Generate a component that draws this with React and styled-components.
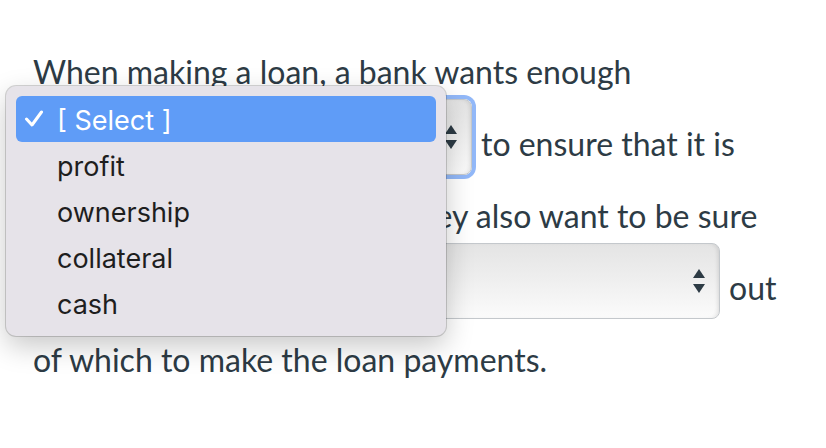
import React from "react";
import styled, { createGlobalStyle, css } from "styled-components";

const Global = createGlobalStyle`
  html, body { margin: 0; padding: 0; background: #ffffff; }
  body { width: 826px; height: 448px; overflow: hidden; }
`;

const Page = styled.div`
  position: relative;
  width: 826px;
  height: 448px;
  box-sizing: border-box;
  padding: 36px 0 0 33px;
  font-family: Lato, "Liberation Sans", sans-serif;
  font-size: 32px;
  color: #2d3b45;
`;

const Line = styled.div`
  display: flex;
  align-items: flex-start;
  height: 72px;
  line-height: 72px;
  white-space: nowrap;
`;

const Picker = styled.div`
  position: relative;
  box-sizing: border-box;
  flex: none;
  height: 76px;
  margin: -9px 9px 0 0;
  border: 1px solid #c4c8cc;
  border-radius: 8px;
  background: linear-gradient(to bottom, #e4e4e4 0%, #efefef 50%, #fbfbfb 100%);
  box-shadow: inset -3px 0 4px -2px rgba(0, 0, 0, 0.12);
  ${(p) =>
    p.$focused &&
    css`
      box-shadow: inset -3px 0 4px -2px rgba(0, 0, 0, 0.12),
        0 0 0 4px rgba(110, 160, 245, 0.75);
    `}
`;

const Arrows = styled.svg`
  position: absolute;
  right: 14px;
  top: 50%;
  margin-top: -13px;
`;

const Menu = styled.ul`
  position: absolute;
  left: 6px;
  top: 86px;
  width: 440px;
  height: 250px;
  box-sizing: border-box;
  margin: 0;
  padding: 10px;
  list-style: none;
  background: #e6e3e9;
  border-radius: 10px;
  box-shadow: 0 0 0 1px rgba(0, 0, 0, 0.16), 0 10px 28px rgba(0, 0, 0, 0.22);
  font-family: Inter, "Noto Sans", sans-serif;
  font-size: 27px;
  color: #1e1e1e;
`;

const Option = styled.li`
  position: relative;
  height: 46px;
  line-height: 50px;
  padding-left: 41px;
  border-radius: 6px;
  ${(p) =>
    p.$active &&
    css`
      background: #5f9cf7;
      color: #ffffff;
    `}
`;

const Check = styled.svg`
  position: absolute;
  left: 8px;
  top: 14px;
`;

function Select({ width, focused }) {
  return (
    <Picker $focused={focused} style={{ width }}>
      <Arrows width="12" height="26" viewBox="0 0 12 26">
        <path d="M6 1 L12 10 L0 10 Z" fill="#2d3b45" />
        <path d="M0 16 L12 16 L6 25 Z" fill="#2d3b45" />
      </Arrows>
    </Picker>
  );
}

const options = ["[ Select ]", "profit", "ownership", "collateral", "cash"];

export default function App() {
  return (
    <Page>
      <Global />
      <Line>When making a loan, a bank wants enough</Line>
      <Line>
        <Select width={439} focused />
        to ensure that it is
      </Line>
      <Line>protected if it isn't repaid. They also want to be sure</Line>
      <Line>
        <Select width={687} />
        out
      </Line>
      <Line>of which to make the loan payments.</Line>
      <Menu>
        {options.map((o, i) => (
          <Option key={o} $active={i === 0}>
            {i === 0 && (
              <Check width="20" height="18" viewBox="0 0 20 18">
                <polyline
                  points="2.5,9 8,15 17.5,2"
                  fill="none"
                  stroke="#ffffff"
                  strokeWidth="3"
                  strokeLinecap="round"
                  strokeLinejoin="round"
                />
              </Check>
            )}
            {o}
          </Option>
        ))}
      </Menu>
    </Page>
  );
}
